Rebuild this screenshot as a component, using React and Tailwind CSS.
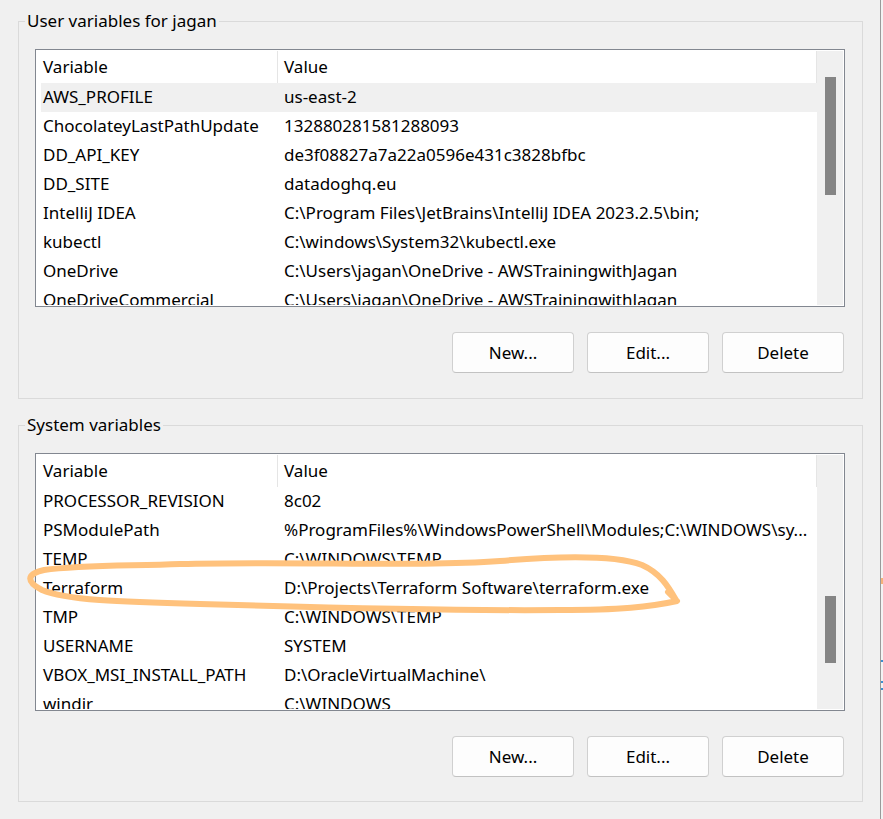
import React from 'react';

const userVars = [
  ['AWS_PROFILE', 'us-east-2'],
  ['ChocolateyLastPathUpdate', '132880281581288093'],
  ['DD_API_KEY', 'de3f08827a7a22a0596e431c3828bfbc'],
  ['DD_SITE', 'datadoghq.eu'],
  ['IntelliJ IDEA', 'C:\\Program Files\\JetBrains\\IntelliJ IDEA 2023.2.5\\bin;'],
  ['kubectl', 'C:\\windows\\System32\\kubectl.exe'],
  ['OneDrive', 'C:\\Users\\jagan\\OneDrive - AWSTrainingwithJagan'],
  ['OneDriveCommercial', 'C:\\Users\\jagan\\OneDrive - AWSTrainingwithJagan'],
];

const systemVars = [
  ['PROCESSOR_REVISION', '8c02'],
  ['PSModulePath', '%ProgramFiles%\\WindowsPowerShell\\Modules;C:\\WINDOWS\\sy...'],
  ['TEMP', 'C:\\WINDOWS\\TEMP'],
  ['Terraform', 'D:\\Projects\\Terraform Software\\terraform.exe'],
  ['TMP', 'C:\\WINDOWS\\TEMP'],
  ['USERNAME', 'SYSTEM'],
  ['VBOX_MSI_INSTALL_PATH', 'D:\\OracleVirtualMachine\\'],
  ['windir', 'C:\\WINDOWS'],
];

const ListView = ({ rows, highlight, thumbTop, thumbHeight }) => (
  <div className="h-[258px] border border-[#828790] bg-white p-px flex overflow-hidden">
    <div className="flex-1 flex flex-col overflow-hidden">
      {/* header */}
      <div className="h-[32px] shrink-0 flex">
        <div className="w-[241px] pl-[6px] border-r border-[#e5e5e5] leading-[31px]">Variable</div>
        <div className="flex-1 pl-[6px] border-r border-[#e5e5e5] leading-[31px]">Value</div>
      </div>
      {rows.map(([name, value], idx) => (
        <div
          key={name}
          className={`h-[29px] shrink-0 flex ml-[4px] leading-[27px] whitespace-nowrap ${idx === highlight ? 'bg-[#f0f0f0]' : ''}`}
        >
          <div className="w-[236px] pl-[2px] overflow-hidden">{name}</div>
          <div className="flex-1 pl-[7px] overflow-hidden">{value}</div>
        </div>
      ))}
    </div>
    {/* scrollbar */}
    <div className="w-[26px] bg-[#f0f0f0] flex flex-col items-center">
      <div style={{ height: thumbTop }} className="shrink-0" />
      <div style={{ height: thumbHeight }} className="w-[11px] bg-[#858585]" />
    </div>
  </div>
);

const Buttons = () => (
  <div className="flex justify-end gap-[13px] mr-[1px] mt-[25px]">
    {['New...', 'Edit...', 'Delete'].map((label) => (
      <button
        key={label}
        className="w-[122px] h-[41px] bg-[#fdfdfd] border border-[#d0d0d0] border-b-[#c2c2c2] rounded-[4px] text-black"
      >
        {label}
      </button>
    ))}
  </div>
);

const Group = ({ title, children, className = '' }) => (
  <fieldset className={`border border-[#dadada] ${className}`}>
    <legend className="ml-[6px] px-[2px] leading-[24px]">{title}</legend>
    <div className="pl-[16px] pr-[17px] pt-[16px]">{children}</div>
  </fieldset>
);

export default function App() {
  return (
    <div className="w-[883px] h-[819px] bg-[#f0f0f0] relative overflow-hidden flex text-black text-[17px] font-['Noto_Sans',sans-serif]">
      <div className="w-[880px] shrink-0 pl-[18px] pr-[17px] pt-[9px]">
        <Group title="User variables for jagan" className="pb-[25px]">
          <ListView rows={userVars} highlight={0} thumbTop={26} thumbHeight={118} />
          <Buttons />
        </Group>
        <Group title="System variables" className="mt-[14px] pb-[24px]">
          <ListView rows={systemVars} highlight={-1} thumbTop={141} thumbHeight={67} />
          <Buttons />
        </Group>
      </div>

      {/* edge of the window behind */}
      <div className="w-[3px] shrink-0 border-l border-[#9a9a9a] bg-[#f3f3f3] flex flex-col">
        <div className="h-[578px]" />
        <div className="h-[6px] bg-[#f5b27a]" />
        <div className="h-[76px]" />
        <div className="h-[2px] bg-[#3c8fd0]" />
        <div className="h-[19px]" />
        <div className="h-[2px] bg-[#3c8fd0]" />
        <div className="h-[5px]" />
        <div className="h-[2px] bg-[#3c8fd0]" />
      </div>

      {/* hand-drawn highlight */}
      <svg className="absolute inset-0 pointer-events-none" width="883" height="819" viewBox="0 0 883 819">
        <path
          d="M 180 564 C 300 561, 420 567, 500 561 C 560 556, 615 555, 642 565 C 660 573, 668 586, 676 600 M 668 592 L 677 601 C 650 607, 620 610, 560 610 C 450 611, 300 607, 200 604 C 120 602, 65 600, 42 590 C 26 582, 26 574, 44 570 C 80 565, 130 566, 180 564"
          fill="none"
          stroke="#ffc27d"
          strokeWidth="6"
          strokeLinecap="round"
          strokeLinejoin="round"
        />
      </svg>
    </div>
  );
}
